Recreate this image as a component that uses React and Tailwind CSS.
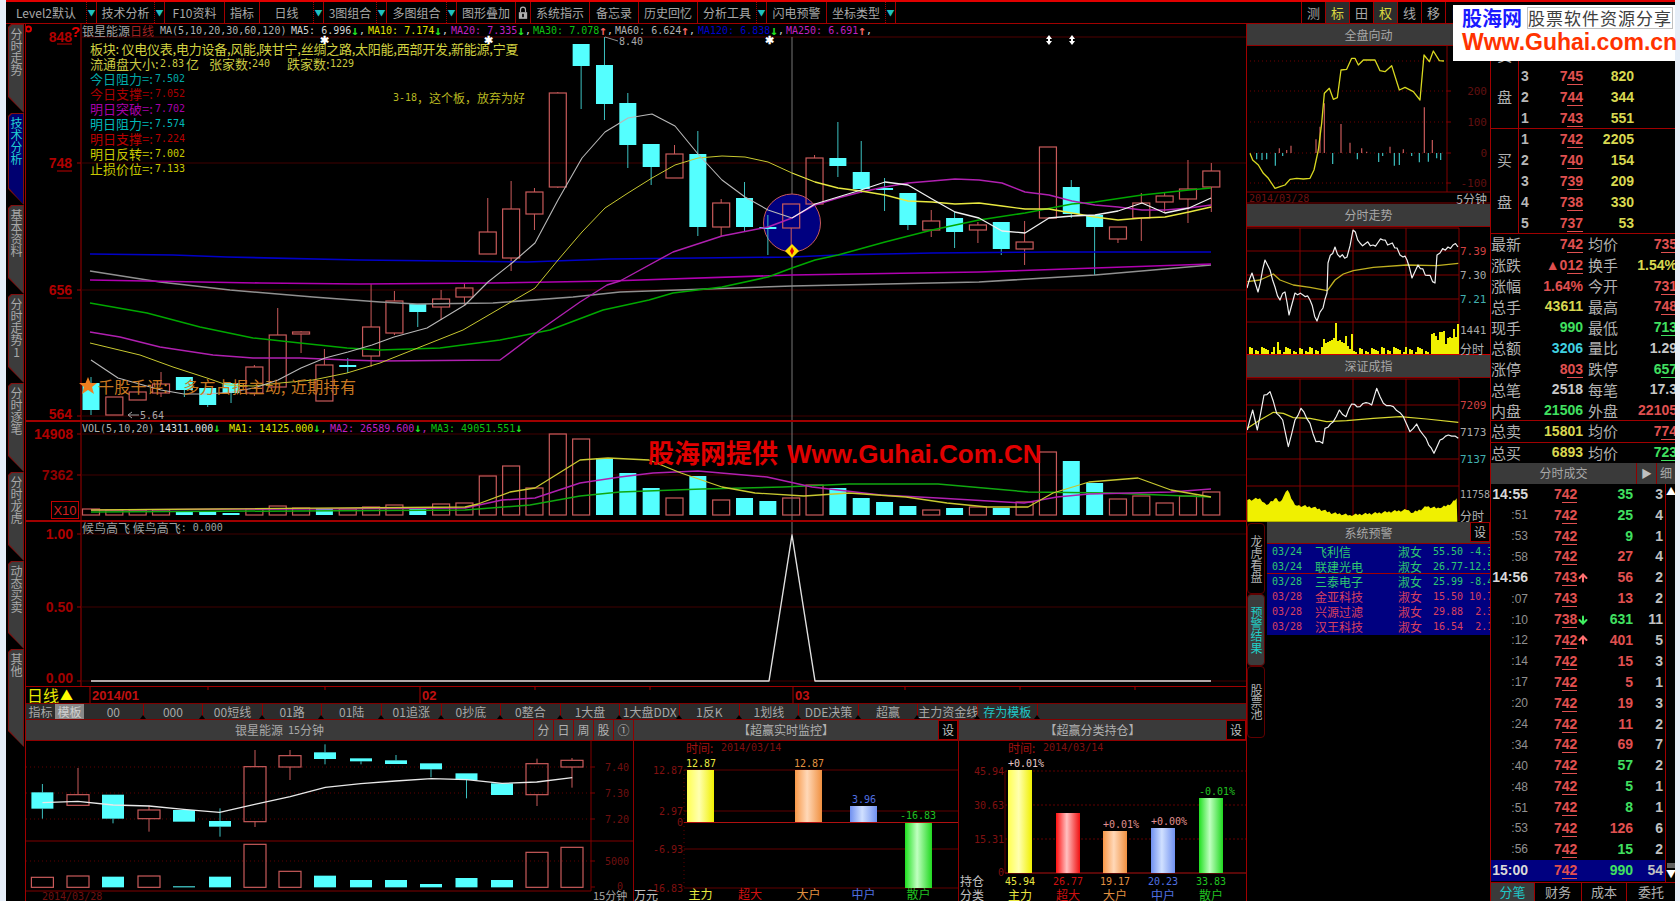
import React from "react";
import { ArrowUp, ArrowDown } from "lucide-react";

const mono = "[font-family:'DejaVu_Sans_Mono','Noto_Sans_CJK_SC',monospace] text-[10px]";
const arial = "[font-family:'Liberation_Sans',sans-serif] font-bold text-[14px]";
const MONO = "DejaVu Sans Mono";
const SANS = "Liberation Sans";
const CJK = "Noto Sans CJK SC";
const P = (a) => a.map((p) => p.join(",")).join(" ");
const Pl = ({ p, c, w = 1.4 }) => <polyline points={P(p)} fill="none" stroke={c} strokeWidth={w} strokeLinejoin="round" />;
const H = ({ y, x1, x2, c = "#400000", w = 1, d }) => <line x1={x1} x2={x2} y1={y} y2={y} stroke={c} strokeWidth={w} strokeDasharray={d} />;
const V = ({ x, y1, y2, c = "#800000", w = 1, d }) => <line x1={x} x2={x} y1={y1} y2={y2} stroke={c} strokeWidth={w} strokeDasharray={d} />;
const T = ({ x, y, c = "#a00000", s = 10, a = "start", f = MONO, b, ls, children }) => (
  <text x={x} y={y} fill={c} fontSize={s} textAnchor={a} fontFamily={f} fontWeight={b ? 700 : 400} letterSpacing={ls} dominantBaseline="central">{children}</text>
);
const jag = (a, step, amp) => {
  const out = [];
  let k = 0;
  for (let i = 0; i < a.length - 1; i++) {
    const [x1, y1] = a[i];
    const [x2, y2] = a[i + 1];
    const n = Math.max(1, Math.round((x2 - x1) / step));
    for (let j = 0; j < n; j++) {
      k++;
      const t = j / n;
      out.push([x1 + (x2 - x1) * t, y1 + (y2 - y1) * t + (j === 0 ? 0 : (((k * 73) % 5) - 2) * amp)]);
    }
  }
  out.push(a[a.length - 1]);
  return out;
};

const UP = "#c85a5a";
const CY = "#54ffff";
const WK = "#3cc0c0";
const CX = (i) => 91 + 23.34 * i;

const candles = [
  [377,383,410,415,"c"],[397,397,415,415,"r"],[392,392,400,400,"r"],[372,384,393,397,"r"],[377,377,390,397,"c"],
  [388,388,405,407,"c"],[383,383,393,403,"c"],[365,367,393,396,"r"],[308,335,387,387,"r"],[331,332,334,353,"r"],
  [349,365,401,401,"r"],[358,365,367,373,"c"],[284,327,356,367,"r"],[291,301,333,335,"r"],[304,304,312,327,"c"],
  [290,299,307,320,"r"],[283,288,297,305,"r"],[198,232,254,254,"r"],[181,209,258,271,"r"],[188,192,214,230,"r"],
  [92,93,187,188,"r"],[44,44,66,109,"c"],[37,65,104,120,"c"],[93,103,145,168,"c"],[144,144,167,185,"c"],
  [145,154,178,178,"r"],[131,154,227,236,"c"],[199,203,227,236,"r"],[182,198,227,231,"c"],[215,227,229,255,"c"],
  [204,204,228,247,"r"],[155,158,204,204,"r"],[122,158,166,177,"c"],[141,172,189,193,"c"],[178,188,190,211,"c"],
  [193,193,225,230,"c"],[210,221,230,237,"r"],[212,218,232,248,"c"],[222,225,230,243,"r"],[222,222,249,255,"c"],
  [221,242,249,265,"r"],[147,147,218,218,"r"],[180,187,214,218,"c"],[215,215,227,275,"c"],[227,227,239,243,"r"],
  [193,203,218,241,"r"],[193,196,202,213,"r"],[160,189,199,223,"r"],[163,171,187,212,"r"],
];
const ma5 = [[91,360],[118,378],[161,390],[184,394],[208,394],[232,392],[254,388],[278,380],[301,368],[325,358],[348,352],[372,345],[394,337],[427,328],[465,305],[488,282],[512,263],[535,243],[558,200],[582,158],[605,132],[628,118],[652,114],[675,126],[698,154],[722,180],[745,197],[768,210],[792,218],[815,204],[838,197],[861,190],[885,182],[908,185],[932,199],[955,212],[979,218],[1002,231],[1025,233],[1049,218],[1072,216],[1095,215],[1118,211],[1142,203],[1165,213],[1189,208],[1211,198]];
const ma10 = [[90,343],[140,355],[173,367],[207,378],[227,385],[253,386],[280,383],[313,380],[347,373],[380,363],[463,330],[535,288],[558,260],[582,232],[605,208],[628,193],[652,178],[675,165],[698,158],[722,156],[745,157],[768,162],[792,173],[815,182],[838,188],[861,191],[885,195],[908,201],[932,202],[955,204],[979,203],[1002,206],[1025,209],[1049,209],[1072,213],[1095,217],[1118,220],[1142,218],[1165,217],[1189,212],[1211,207]];
const ma20 = [[90,332],[120,337],[160,347],[213,355],[253,358],[300,358],[347,360],[380,361],[500,360],[540,330],[580,302],[607,285],[620,281],[673,252],[722,236],[768,227],[792,218],[815,205],[838,198],[861,192],[885,187],[908,183],[932,181],[955,179],[979,180],[1002,183],[1025,192],[1049,195],[1072,201],[1095,205],[1118,207],[1142,210],[1165,210],[1189,208],[1211,205]];
const ma30 = [[90,303],[147,313],[200,327],[253,338],[300,343],[347,348],[380,350],[440,348],[500,340],[550,330],[603,310],[649,300],[673,293],[722,287],[768,277],[792,268],[815,260],[838,255],[885,242],[932,230],[979,220],[1025,213],[1072,204],[1095,202],[1142,195],[1189,190],[1211,188]];
const ma120 = [[90,254],[173,255],[227,257],[360,260],[527,262],[610,259],[792,257],[838,255],[932,253],[1049,252],[1211,252]];
const ma250 = [[90,280],[260,283],[360,284],[493,283],[610,281],[792,275],[979,272],[1095,268],[1211,264]];
const maG = [[90,271],[160,282],[230,290],[313,297],[380,302],[417,304],[493,303],[573,297],[620,292],[792,286],[979,282],[1095,275],[1211,265]];

const vol = [[509,"r"],[510,"r"],[510,"r"],[510,"r"],[512,"c"],[512,"c"],[513,"c"],[509,"r"],[506,"r"],[508,"r"],[508,"c"],[509,"r"],[507,"r"],[505,"r"],[509,"c"],[504,"r"],[503,"r"],[476,"r"],[466,"r"],[488,"r"],[434,"r"],[439,"r"],[458,"c"],[473,"c"],[488,"c"],[498,"r"],[476,"c"],[500,"r"],[498,"c"],[501,"c"],[498,"r"],[485,"r"],[488,"c"],[498,"c"],[502,"c"],[506,"c"],[510,"r"],[508,"c"],[507,"r"],[508,"c"],[502,"r"],[452,"r"],[461,"c"],[483,"c"],[499,"r"],[496,"r"],[503,"r"],[496,"r"],[492,"r"]];
const vY = [[91,510],[465,507],[478,504],[510,492],[535,488],[580,460],[608,458],[649,460],[681,473],[722,487],[755,493],[804,496],[849,493],[906,497],[947,503],[987,507],[1028,507],[1053,493],[1089,482],[1138,478],[1171,490],[1211,497]];
const vM = [[91,510],[465,508],[502,500],[535,498],[580,483],[620,477],[653,473],[698,471],[767,477],[812,487],[881,495],[938,498],[1024,503],[1057,497],[1089,494],[1130,493],[1171,492],[1211,489]];
const vG = [[91,512],[465,510],[530,505],[580,496],[620,492],[702,489],[783,487],[849,484],[938,484],[1028,492],[1110,493],[1211,497]];

const Candle = ({ x, hi, top, bot, lo, t, w = 17 }) => (
  <g>
    <line x1={x} x2={x} y1={hi} y2={top} stroke={t === "r" ? UP : WK} />
    <line x1={x} x2={x} y1={bot} y2={lo} stroke={t === "r" ? UP : WK} />
    {t === "r" ? (
      <rect x={x - w / 2} y={top} width={w} height={Math.max(bot - top, 1)} fill="none" stroke={UP} strokeWidth={1.2} />
    ) : (
      <rect x={x - w / 2} y={top} width={w} height={Math.max(bot - top, 1)} fill={CY} />
    )}
  </g>
);

function MainChart() {
  return (
    <svg viewBox="26 24 1220 396" width="1220" height="396" className="block">
      <V x={81} y1={24} y2={420} c="#a00000" />
      <H y={37} x1={81} x2={1246} c="#500000" />
      <H y={163} x1={81} x2={1246} />
      <H y={290} x1={81} x2={1246} />
      <H y={416} x1={81} x2={1246} />
      <V x={792} y1={37} y2={420} c="#777777" />
      <ellipse cx={792} cy={223} rx={28.5} ry={29} fill="#000080" stroke="#c85a5a" />
      {candles.map((c, i) => (
        <Candle key={i} x={CX(i)} hi={c[0]} top={c[1]} bot={c[2]} lo={c[3]} t={c[4]} />
      ))}
      <Pl p={maG} c="#909090" w={1.6} />
      <Pl p={ma250} c="#b000b0" w={1.6} />
      <Pl p={ma120} c="#0000c8" w={1.6} />
      <Pl p={ma30} c="#00a800" w={1.5} />
      <Pl p={ma20} c="#b020b0" w={1.4} />
      <Pl p={ma10.filter((q) => q[0] <= 792)} c="#c8c830" w={1} />
      <Pl p={ma10.filter((q) => q[0] >= 792)} c="#e8e840" w={1.3} />
      <Pl p={ma5.filter((q) => q[0] <= 792)} c="#b8b8b8" w={1.1} />
      <Pl p={ma5.filter((q) => q[0] >= 792)} c="#f0f0f0" w={1.3} />
      <polygon points="792,244 799,251 792,258 785,251" fill="#ffe000" />
      <polygon points="792,247 794,251 792,255 790,251" fill="#e00000" />
      <polyline points="605,37 618,41" stroke="#909090" fill="none" />
      <T x={619} y={41} c="#a8a8a8">8.40</T>
      <polyline points="132,412 128,415 132,418" stroke="#a0a0a0" fill="none" />
      <H y={415} x1={128} x2={139} c="#a0a0a0" />
      <T x={129 + 11} y={415} c="#a8a8a8">5.64</T>
      <T x={72} y={37} s={14} f={SANS} b a="end" c="#b00000">848</T>
      <T x={72} y={163} s={14} f={SANS} b a="end" c="#b00000">748</T>
      <T x={72} y={290} s={14} f={SANS} b a="end" c="#b00000">656</T>
      <T x={72} y={414} s={14} f={SANS} b a="end" c="#b00000">564</T>
      <H y={44} x1={57} x2={72} c="#c00000" />
      <H y={171} x1={57} x2={72} c="#c00000" />
      <H y={298} x1={57} x2={72} c="#c00000" />
      {[163, 290, 416].map((y) => <H key={y} y={y} x1={77} x2={81} c="#a00000" />)}
      <T x={71} y={31} s={15} f={SANS} b c="#e00000">?</T>
      <circle cx={28.5} cy={29} r={2.5} fill="none" stroke="#e00000" strokeWidth={2} />
      <text x={324} y={44} fill="#fff" fontSize={11} textAnchor="middle" fontFamily={SANS} fontWeight={700}>✱</text>
      <text x={488} y={44} fill="#fff" fontSize={11} textAnchor="middle" fontFamily={SANS} fontWeight={700}>✱</text>
      <text x={769} y={44} fill="#fff" fontSize={11} textAnchor="middle" fontFamily={SANS} fontWeight={700}>✱</text>
      <polygon points="1049,35 1052,39 1050,39 1050,41 1052,41 1049,45 1046,41 1048,41 1048,39 1046,39" fill="#fff" />
      <polygon points="1072,35 1075,39 1073,39 1073,41 1075,41 1072,45 1069,41 1071,41 1071,39 1069,39" fill="#fff" />
      <polygon points="88,377 90.5,383 97,383 92,387 94,394 88,390 82,394 84,387 79,383 85.5,383" fill="#f08020" />
    </svg>
  );
}

function VolChart() {
  return (
    <svg viewBox="26 422 1220 98" width="1220" height="98" className="block">
      <V x={81} y1={422} y2={520} c="#a00000" />
      <H y={434} x1={81} x2={1246} />
      <H y={475} x1={81} x2={1246} />
      <V x={792} y1={422} y2={520} c="#777777" />
      {vol.map((v, i) =>
        v[1] === "r" ? (
          <rect key={i} x={CX(i) - 8.5} y={v[0]} width={17} height={515 - v[0]} fill="none" stroke={UP} strokeWidth={1.2} />
        ) : (
          <rect key={i} x={CX(i) - 8.5} y={v[0]} width={17} height={515 - v[0]} fill={CY} />
        )
      )}
      <Pl p={vG} c="#10a810" w={1.5} />
      <Pl p={vM} c="#b020b0" w={1.5} />
      <Pl p={vY} c="#c8c830" w={1.3} />
      <T x={73} y={434} s={14} f={SANS} b a="end" c="#b00000">14908</T>
      <T x={73} y={475} s={14} f={SANS} b a="end" c="#900000">7362</T>
      {[434, 475].map((y) => <H key={y} y={y} x1={77} x2={81} c="#a00000" />)}
      <rect x={51.5} y={501.5} width={27} height={17} fill="none" stroke="#c00000" />
      <T x={65} y={510} s={13} f={SANS} a="middle" c="#d02020">X10</T>
    </svg>
  );
}

function OscChart() {
  return (
    <svg viewBox="26 522 1220 164" width="1220" height="164" className="block">
      <V x={81} y1={522} y2={686} c="#a00000" />
      <H y={534} x1={81} x2={1246} />
      <H y={607} x1={81} x2={1246} />
      <H y={681} x1={81} x2={1246} />
      <V x={792} y1={522} y2={535} c="#777777" />
      <Pl p={[[91,681],[769,681],[792,535],[815,681],[1211,681]]} c="#e0e0e0" w={1.4} />
      <T x={73} y={534} s={14} f={SANS} b a="end" c="#b00000">1.00</T>
      <T x={73} y={607} s={14} f={SANS} b a="end" c="#a00000">0.50</T>
      <T x={73} y={678} s={14} f={SANS} b a="end" c="#a00000">0.00</T>
      {[534, 607, 681].map((y) => <H key={y} y={y} x1={77} x2={81} c="#a00000" />)}
    </svg>
  );
}

function DateRow() {
  return (
    <div className="flex h-[16px] bg-black">
      <div className="flex w-[55px] items-center pl-[1px] text-[16px] leading-[16px] text-[#e8e800]">
        日线<span className="ml-[1px] text-[13px] text-[#ffff00]">▲</span>
      </div>
      <svg viewBox="81 687 1165 16" width="1165" height="16" className="block">
        <V x={90} y1={687} y2={703} c="#a00000" />
        <V x={420} y1={687} y2={703} c="#a00000" />
        <V x={793} y1={687} y2={703} c="#a00000" />
        {[208, 325, 535, 650, 905, 1020, 1135].map((x) => <V key={x} x={x} y1={687} y2={690} c="#a00000" />)}
        <T x={92} y={695} s={13} f={SANS} b c="#c01010">2014/01</T>
        <T x={422} y={695} s={13} f={SANS} b c="#c01010">02</T>
        <T x={795} y={695} s={13} f={SANS} b c="#c01010">03</T>
      </svg>
    </div>
  );
}

const tabItems = ["00","000","00短线","01路","01陆","01追涨","0抄底","0整合","1大盘","1大盘DDX","1反K","1划线","DDE决策","超赢","主力资金线","存为模板"];
function TabBar() {
  return (
    <div className="flex h-[17px] items-center border-y border-[#800000] bg-[#2c2c2c] text-[12px] leading-[15px] text-[#a8a8a8]">
      <div className="w-[29px] text-center">指标</div>
      <div className="w-[29px] bg-[#888888] text-center text-[#d0d0d0]">模板</div>
      {tabItems.map((t, i) => (
        <div key={i} className={"relative h-full w-[59.6px] whitespace-nowrap border-r border-[#900000] text-center " + (t === "存为模板" ? "text-[#20c8c8]" : "")}>
          {t}
          <span className="absolute -right-[3px] bottom-0 h-0 w-0 border-x-[3px] border-b-[4px] border-x-transparent border-b-black" />
        </div>
      ))}
      <div className="flex-1" />
    </div>
  );
}

const Title = ({ children, h = "h-[22px]", cls = "" }) => (
  <div className={"flex items-center justify-center border-b border-[#900000] bg-[#3a3a3a] text-[12px] text-[#a8a8a8] " + h + " " + cls}>{children}</div>
);
const Sbtn = ({ children }) => (
  <div className="flex h-[20px] w-[20px] shrink-0 items-center justify-center border border-[#a00000] bg-black text-[12px] text-[#c0c0c0]">{children}</div>
);

const k15 = [
  [312,337,386,416,"c"],[264,344,376,376,"r"],[344,344,416,430,"c"],[376,390,416,455,"r"],[388,390,425,425,"c"],[385,423,440,470,"c"],[210,260,425,441,"r"],[210,227,261,300,"r"],[193,217,237,253,"c"],[235,235,244,253,"c"],[225,241,252,252,"c"],[250,250,268,292,"c"],[280,280,300,355,"c"],[310,310,345,345,"c"],[236,251,344,378,"r"],[234,241,261,323,"r"],
];
const k15x = [42.4,78,113,149,184,220,255,290,325,361,396,431,466.5,502,537,572];
const k15m = [[104,368],[191,364],[277,375],[365,378],[450,388],[538,397],[624,373],[711,350],[797,322],[884,311],[969,303],[1057,296],[1143,299],[1230,310],[1315,306],[1402,293]];
const k15v = [[592,"r"],[588,"r"],[590,"c"],[588,"r"],[619,"c"],[590,"c"],[493,"r"],[574,"r"],[587,"c"],[600,"c"],[600,"c"],[612,"c"],[594,"c"],[600,"c"],[517,"r"],[502,"r"]];
const zy = (v) => 680 + v / 3;

function KChart() {
  return (
    <svg viewBox="26 741 607 160" width="607" height="160" className="block">
      {[767, 793, 819, 861].map((y) => <H key={y} y={y} x1={26} x2={591} c="#600000" d="1 3" />)}
      <H y={841} x1={26} x2={633} c="#800000" />
      <H y={891} x1={26} x2={591} c="#800000" />
      <V x={591} y1={741} y2={891} c="#800000" />
      {[767, 793, 819, 861, 887].map((y) => <H key={y} y={y} x1={591} x2={595} c="#800000" />)}
      {k15.map((c, i) => (
        <Candle key={i} x={k15x[i]} hi={zy(c[0])} top={zy(c[1])} bot={zy(c[2])} lo={zy(c[3])} t={c[4]} w={22} />
      ))}
      {k15v.map((v, i) =>
        v[1] === "r" ? (
          <rect key={i} x={k15x[i] - 11} y={zy(v[0])} width={22} height={zy(622) - zy(v[0])} fill="none" stroke={UP} strokeWidth={1.2} />
        ) : (
          <rect key={i} x={k15x[i] - 11} y={zy(v[0])} width={22} height={zy(622) - zy(v[0])} fill={CY} />
        )
      )}
      <Pl p={k15m.map((p) => [p[0] / 2.45, zy(p[1])])} c="#e8e8e8" w={1.3} />
      <T x={605} y={767} c="#701010">7.40</T>
      <T x={605} y={793} c="#701010">7.30</T>
      <T x={605} y={819} c="#701010">7.20</T>
      <T x={605} y={861} c="#701010">5000</T>
      <T x={617} y={886} c="#701010">0</T>
      <T x={42} y={896} c="#701010">2014/03/28</T>
      <T x={593} y={895} s={11} f={CJK} c="#a8a8a8">15分钟</T>
    </svg>
  );
}

const grads = [
  ["gy", "#ffff50", "#ffffb0", "#f0f000"],
  ["gr", "#ff1010", "#ffc0c0", "#f01010"],
  ["go", "#f89848", "#ffd8b8", "#f09040"],
  ["gb", "#7090f0", "#d0e0ff", "#7090f0"],
  ["gg", "#20e020", "#c0ffc0", "#20d820"],
];
const Grads = () => (
  <defs>
    {grads.map((g) => (
      <linearGradient key={g[0]} id={g[0]} x1="0" x2="1" y1="0" y2="0">
        <stop offset="0" stopColor={g[1]} />
        <stop offset="0.45" stopColor={g[2]} />
        <stop offset="1" stopColor={g[3]} />
      </linearGradient>
    ))}
  </defs>
);
const YL = "#e8e840";
const RD = "#d01010";
const OR = "#e09040";
const BL = "#5070e0";
const GN = "#20c020";

function MonitorChart() {
  const xs = [700.5, 750, 808.5, 863.5, 918.5];
  const labs = ["主力", "超大", "大户", "中户", "散户"];
  const cs = [YL, RD, OR, BL, GN];
  return (
    <svg viewBox="634 741 324 160" width="324" height="160" className="block">
      <Grads />
      <H y={770} x1={684} x2={958} c="#600000" />
      <H y={811} x1={684} x2={958} c="#600000" />
      <H y={849} x1={684} x2={958} c="#600000" />
      <H y={888} x1={684} x2={958} c="#600000" />
      <V x={684} y1={770} y2={888} c="#600000" d="1 3" />
      <T x={686} y={747} s={12} f={CJK} c="#a01010">时间:</T>
      <T x={721} y={747} c="#801010">2014/03/14</T>
      <T x={683} y={770} a="end" c="#801010">12.87</T>
      <T x={683} y={811} a="end" c="#801010">2.97</T>
      <T x={683} y={822} a="end" c="#801010">0</T>
      <T x={683} y={849} a="end" c="#801010">-6.93</T>
      <T x={683} y={888} a="end" c="#801010">-16.83</T>
      <rect x={687} y={770} width={27} height={52} fill="url(#gy)" />
      <rect x={795} y={770} width={27} height={52} fill="url(#go)" />
      <rect x={850} y={806} width={27} height={16} fill="url(#gb)" />
      <rect x={905} y={823} width={27} height={65} fill="url(#gg)" />
      <H y={822.5} x1={684} x2={958} c="#b01010" />
      <T x={701} y={763} a="middle" c={YL}>12.87</T>
      <T x={809} y={763} a="middle" c={OR}>12.87</T>
      <T x={864} y={799} a="middle" c={BL}>3.96</T>
      <T x={918} y={815} a="middle" c={GN}>-16.83</T>
      {labs.map((l, i) => <T key={l} x={xs[i]} y={893} s={12} f={CJK} a="middle" c={cs[i]}>{l}</T>)}
      <T x={634} y={894} s={12} f={CJK} c="#c0c0c0">万元</T>
    </svg>
  );
}

function HoldChart() {
  const bars = [[1008,770,"gy"],[1056,813,"gr"],[1103,831,"go"],[1151,828,"gb"],[1199,798,"gg"]];
  const vals = ["45.94","26.77","19.17","20.23","33.83"];
  const labs = ["主力", "超大", "大户", "中户", "散户"];
  const cs = [YL, RD, OR, BL, GN];
  return (
    <svg viewBox="959 741 287 160" width="287" height="160" className="block">
      <Grads />
      {[771, 805, 839].map((y) => <H key={y} y={y} x1={1005} x2={1246} c="#600000" d="2 2" />)}
      <H y={873} x1={1005} x2={1246} c="#b01010" />
      <V x={1005} y1={771} y2={873} c="#600000" />
      <T x={1008} y={747} s={12} f={CJK} c="#a01010">时间:</T>
      <T x={1043} y={747} c="#801010">2014/03/14</T>
      <T x={1004} y={771} a="end" c="#801010">45.94</T>
      <T x={1004} y={805} a="end" c="#801010">30.63</T>
      <T x={1004} y={839} a="end" c="#801010">15.31</T>
      <T x={1004} y={872} a="end" c="#801010">0</T>
      {bars.map((b) => <rect key={b[0]} x={b[0]} y={b[1]} width={24} height={873 - b[1]} fill={`url(#${b[2]})`} />)}
      <T x={1008} y={763} c="#e8c8c8">+0.01%</T>
      <T x={1103} y={824} c="#e09090">+0.01%</T>
      <T x={1151} y={821} c="#e09090">+0.00%</T>
      <T x={1199} y={791} c={GN}>-0.01%</T>
      {vals.map((v, i) => <T key={v} x={bars[i][0] + 12} y={881} a="middle" c={cs[i]}>{v}</T>)}
      {labs.map((l, i) => <T key={l} x={bars[i][0] + 12} y={894} s={12} f={CJK} a="middle" c={cs[i]}>{l}</T>)}
      <T x={960} y={880} s={12} f={CJK} c="#c0c0c0">持仓</T>
      <T x={960} y={894} s={12} f={CJK} c="#c0c0c0">分类</T>
    </svg>
  );
}

function BottomPanels() {
  return (
    <div className="flex h-[181px]">
      <div className="w-[608px] border-r border-[#900000]">
        <div className="flex h-[21px] border-b border-[#900000] bg-[#3a3a3a]">
          <div className="flex flex-1 items-center justify-center text-[12px] text-[#a8a8a8]">
            银星能源<span className={mono + " ml-[5px] text-[#a8a8a8]"}>15</span>分钟
          </div>
          {["分", "日", "周", "股", "①"].map((b) => (
            <div key={b} className="flex w-[20px] items-center justify-center border-l border-[#900000] text-[12px] text-[#b0b0b0]">{b}</div>
          ))}
        </div>
        <KChart />
      </div>
      <div className="w-[325px] border-r border-[#900000]">
        <div className="flex h-[21px] items-center border-b border-[#900000] bg-[#3a3a3a]">
          <div className="flex-1 text-center text-[12px] text-[#b0b0b0]">【超赢实时监控】</div>
          <Sbtn>设</Sbtn>
        </div>
        <MonitorChart />
      </div>
      <div className="w-[287px]">
        <div className="flex h-[21px] items-center border-b border-[#900000] bg-[#3a3a3a]">
          <div className="flex-1 text-center text-[12px] text-[#b0b0b0]">【超赢分类持仓】</div>
          <Sbtn>设</Sbtn>
        </div>
        <HoldChart />
      </div>
    </div>
  );
}

const HeadItem = ({ cls, label, val, c, arrow, ac, comma = true }) => (
  <div className={"flex items-center whitespace-pre " + mono + " " + cls} >
    <span className={c}>{label} </span>
    <span className={c}>{val}</span>
    <span className={"text-[13px] font-bold " + ac}>{arrow}</span>
    {comma && <span className="text-[#d0d0d0]">,</span>}
  </div>
);

const infoRows = [
  ["今日阻力=:", "7.502", "text-[#00a8a8]"],
  ["今日支撑=:", "7.052", "text-[#a80000]"],
  ["明日突破=:", "7.702", "text-[#a800a8]"],
  ["明日阻力=:", "7.574", "text-[#00b8b8]"],
  ["明日支撑=:", "7.224", "text-[#b80000]"],
  ["明日反转=:", "7.002", "text-[#c8c800]"],
  ["止损价位=:", "7.133", "text-[#c8c800]"],
];

function MainPanel() {
  return (
    <div className="relative h-[398px] border-b-2 border-[#a00000]">
      <MainChart />
      <div className="absolute left-[56px] top-0 flex h-[13px] items-center leading-[13px]">
        <span className="w-[48px] whitespace-nowrap text-[12px] text-[#a0a0a0]">银星能源</span>
        <span className="w-[30px] whitespace-nowrap text-[12px] text-[#a02020]">日线</span>
        <span className={mono + " w-[131px] whitespace-pre text-[#b0b0b0]"}>MA(5,10,20,30,60,120)</span>
        <HeadItem cls="w-[77px]" label="MA5:" val="6.996" c="text-[#d0d0d0]" arrow="↓" ac="text-[#20e020]" />
        <HeadItem cls="w-[83px]" label="MA10:" val="7.174" c="text-[#e0e000]" arrow="↓" ac="text-[#20e020]" />
        <HeadItem cls="w-[82px]" label="MA20:" val="7.335" c="text-[#c020c0]" arrow="↓" ac="text-[#20e020]" />
        <HeadItem cls="w-[82px]" label="MA30:" val="7.078" c="text-[#10c010]" arrow="↑" ac="text-[#f06060]" />
        <HeadItem cls="w-[83px]" label="MA60:" val="6.624" c="text-[#b0b0b0]" arrow="↑" ac="text-[#f06060]" />
        <HeadItem cls="w-[88px]" label="MA120:" val="6.838" c="text-[#0000c8]" arrow="↓" ac="text-[#20e020]" />
        <HeadItem cls="w-[88px]" label="MA250:" val="6.691" c="text-[#c020c0]" arrow="↑" ac="text-[#f06060]" />
      </div>
      <div className="absolute left-[64px] top-[17px] flex flex-col text-[13px] leading-[15px]">
        <div className="whitespace-pre tracking-[-0.25px] text-[#d0d040]">板块: 仪电仪表,电力设备,风能,陕甘宁,丝绸之路,太阳能,西部开发,新能源,宁夏</div>
        <div className="flex whitespace-pre text-[#c8c840]">
          <span className="w-[70px]">流通盘大小:</span>
          <span className={mono + " w-[26px] leading-[15px]"}>2.83</span>
          <span className="w-[23px]">亿</span>
          <span className="w-[43px]">张家数:</span>
          <span className={mono + " w-[35px] leading-[15px]"}>240</span>
          <span className="w-[43px]">跌家数:</span>
          <span className={mono + " leading-[15px]"}>1229</span>
        </div>
        {infoRows.map((r) => (
          <div key={r[0]} className={"flex " + r[2]}>
            <span className="w-[65px] whitespace-nowrap">{r[0]}</span>
            <span className={mono + " leading-[15px]"}>{r[1]}</span>
          </div>
        ))}
      </div>
      <div className="absolute left-[367px] top-[67px] flex h-[14px] items-center whitespace-nowrap text-[12px] leading-[14px] text-[#b8b820]">
        <span className={mono}>3-18</span>，这个板，放弃为好
      </div>
      <div className="absolute left-[72px] top-[352px] flex whitespace-nowrap text-[16px] leading-[20px] tracking-[0.3px] text-[#c87820]">
        <span>千股千评</span>
        <span className="w-[20px]">:</span>
        <span>多方占据主动</span>
        <span className="w-[10px]">,</span>
        <span>近期持有</span>
      </div>
    </div>
  );
}

function VolPanel() {
  return (
    <div className="relative h-[100px] border-b-2 border-[#a00000]">
      <VolChart />
      <div className={mono + " absolute left-[56px] top-0 flex h-[13px] items-center whitespace-pre leading-[13px]"}>
        <span className="w-[77px] text-[#b0b0b0]">VOL(5,10,20)</span>
        <span className="w-[70px] text-[#e0e0e0]">14311.000<span className="text-[12px] font-bold text-[#20e020]">↓</span></span>
        <span className="w-[101px] text-[#e0e000]">MA1: 14125.000<span className="text-[12px] font-bold text-[#20e020]">↓</span>,</span>
        <span className="w-[101px] text-[#c020c0]">MA2: 26589.600<span className="text-[12px] font-bold text-[#20e020]">↓</span>,</span>
        <span className="text-[#10c010]">MA3: 49051.551<span className="text-[12px] font-bold text-[#20e020]">↓</span></span>
      </div>
    </div>
  );
}

function OscPanel() {
  return (
    <div className="relative h-[165px] border-b border-[#a00000]">
      <OscChart />
      <div className="absolute left-[56px] top-0 flex h-[12px] items-center whitespace-pre text-[12px] leading-[12px] text-[#a0a0a0]">
        候鸟高飞 候鸟高飞<span className={mono}>: 0.000</span>
      </div>
    </div>
  );
}

const leftTabs = [
  ["分时走势", "h-[89px]"],
  ["技术分析", "h-[92px]", true],
  ["基本资料", "h-[89px]"],
  ["分时走势1", "h-[89px]"],
  ["分时逐笔", "h-[89px]"],
  ["分时龙虎", "h-[89px]"],
  ["动态买卖", "h-[88px]"],
  ["其他", "h-[98px]"],
];
function LeftTabs() {
  return (
    <div className="flex w-[19px] shrink-0 flex-col pl-[2px]">
      {leftTabs.map((t) => (
        <div key={t[0]} className={"w-[16px] bg-[#801010] [clip-path:polygon(3px_0,100%_0,100%_100%,0_calc(100%_-_16px),0_3px)] " + t[1]}>
          <div className={"m-px flex h-[calc(100%_-_2px)] justify-center pt-[3px] [clip-path:polygon(3px_0,100%_0,100%_100%,0_calc(100%_-_16px),0_3px)] " + (t[2] ? "bg-[#000070] text-[#20d0d0]" : "bg-[#3c3c3c] text-[#a8a8a8]")}>
            <span className="text-[12px] leading-[14px] [text-orientation:upright] [writing-mode:vertical-rl]">{t[0]}</span>
          </div>
        </div>
      ))}
    </div>
  );
}

const toolItems = [
  ["Level2默认", "w-[91px]", 1],
  ["技术分析", "w-[68px]", 1],
  ["F10资料", "w-[60px]"],
  ["指标", "w-[35px]"],
  ["日线", "w-[64px]", 1],
  ["3图组合", "w-[63px]", 1],
  ["多图组合", "w-[70px]", 1],
  ["图形叠加", "w-[59px]"],
  ["🔓", "w-[15px]"],
  ["系统指示", "w-[59px]"],
  ["备忘录", "w-[49px]"],
  ["历史回忆", "w-[59px]"],
  ["分析工具", "w-[69px]", 1],
  ["闪电预警", "w-[60px]"],
  ["坐标类型", "w-[69px]", 1],
];
const rightBtns = [["测", ""], ["标", "bg-[#2c2c2c] text-[#d8d840]"], ["田", ""], ["权", "bg-[#2c2c2c] text-[#d8d840]"], ["线", ""], ["移", ""], ["日", ""]];

function Toolbar() {
  return (
    <div className="flex h-[24px] shrink-0 border-b border-t-2 border-b-[#a00000] border-t-[#e00000] text-[12px] leading-[21px] text-[#a8a8a8]">
      {toolItems.map((t, i) => (
        <div key={i} className={"flex h-full shrink-0 items-center border-r border-[#a00000] " + t[1]}>
          <div className="flex-1 whitespace-nowrap text-center">
            {t[0] === "🔓" ? (
              <svg viewBox="0 0 12 16" className="mx-auto h-[14px] w-[10px]">
                <path d="M3 7V4a3 3 0 0 1 6 0v3" fill="none" stroke="#b0b0b0" strokeWidth="1.4" />
                <rect x="1" y="7" width="10" height="8" fill="#b0b0b0" />
                <rect x="5" y="9" width="2" height="4" fill="#000" />
              </svg>
            ) : t[0]}
          </div>
          {t[2] && (
            <div className="flex h-full w-[10px] items-center justify-center border-l border-dotted border-[#a00000] text-[8px] text-[#20c0c0]">▼</div>
          )}
        </div>
      ))}
      <div className="w-[405px] shrink-0" />
      {rightBtns.map((b) => (
        <div key={b[0]} className={"flex h-full w-[24px] shrink-0 items-center justify-center border-l border-[#a00000] text-[13px] " + b[1]}>{b[0]}</div>
      ))}
    </div>
  );
}

/* small charts */
const m = (a, oy = 250) => a.map((p) => [1240 + p[0] / 3, oy + p[1] / 3]);
const panYellow = [[30,460],[38,480],[55,495],[70,520],[85,535],[105,565],[120,560],[135,555],[150,538],[170,535],[190,537],[210,535],[222,510],[235,450],[245,370],[253,280],[268,265],[280,298],[292,293],[303,210],[320,208],[335,175],[345,175],[355,195],[370,180],[405,180],[420,212],[435,215],[455,197],[478,270],[495,262],[520,275],[540,300],[552,165],[568,185],[580,153],[598,182],[612,183]];
const panUp = [[118,445],[140,450],[153,437],[228,418],[240,380],[253,310],[303,372],[330,428],[365,445],[380,455],[450,440],[490,448],[553,322],[577,420]];
const panDn = [[50,478],[66,480],[80,478],[106,497],[128,468],[278,492],[352,478],[416,486],[428,468],[463,497],[478,495],[515,468],[538,487],[565,485],[590,475],[602,480]];

function PanChart() {
  return (
    <svg viewBox="1247 46 243 158" width="243" height="158" className="block">
      {[61, 91, 122, 183].map((y) => <H key={y} y={y} x1={1250} x2={1447} c="#700000" d="1 3" />)}
      <H y={153} x1={1250} x2={1447} c="#700000" d="1 3" />
      <V x={1447} y1={46} y2={192} c="#800000" />
      <H y={192} x1={1247} x2={1490} c="#800000" />
      <H y={203} x1={1247} x2={1490} c="#800000" />
      {[91, 122, 153, 183].map((y) => <H key={y} y={y} x1={1447} x2={1451} c="#800000" />)}
      {panUp.map((p, i) => <V key={i} x={1240 + p[0] / 3} y1={p[1] / 3} y2={153} c={UP} w={1.2} />)}
      {panDn.map((p, i) => <V key={i} x={1240 + p[0] / 3} y1={153} y2={p[1] / 3} c={WK} w={1.2} />)}
      <Pl p={panYellow.map((p) => [1240 + p[0] / 3, p[1] / 3])} c="#d8d820" w={1.3} />
      <T x={1487} y={91} a="end" s={11} c="#601010">200</T>
      <T x={1487} y={122} a="end" s={11} c="#601010">100</T>
      <T x={1487} y={153} a="end" s={11} c="#601010">0</T>
      <T x={1487} y={183} a="end" s={11} c="#601010">-100</T>
      <T x={1249} y={198} s={10} c="#701010">2014/03/28</T>
      <T x={1487} y={198} s={12} f={CJK} a="end" c="#b0b0b0">5分钟</T>
    </svg>
  );
}

const fsW = [[1247,288],[1252,273],[1258,292],[1265,260],[1270,270],[1275,287],[1280,300],[1285,292],[1289,315],[1295,293],[1303,295],[1310,300],[1317,321],[1323,308],[1327,293],[1328,263],[1335,247],[1340,257],[1347,257],[1353,230],[1360,243],[1373,245],[1383,240],[1397,248],[1403,257],[1407,260],[1412,278],[1418,265],[1435,283],[1437,255],[1440,253],[1448,247],[1453,245],[1458,247]];
const fsY = m([[22,95],[60,90],[100,72],[120,90],[160,105],[210,112],[262,122],[285,90],[310,72],[340,62],[400,52],[500,45],[590,47],[655,40]]);
const fsVol = Array.from({ length: 106 }, (_, i) => {
  let h = (i * 37) % 11 < 3 ? 0 : 2 + ((i * 53) % 6);
  if (i >= 38 && i <= 50) h += 8 + ((i * 7) % 5);
  if (i >= 92) h += 10 + ((i * 11) % 9);
  if (i === 15) h = 12;
  if (i === 44) h = 31;
  if (i === 52) h = 20;
  if (i === 105) h = 30;
  if (i === 96) h = 22;
  return h;
});

function FsChart() {
  return (
    <svg viewBox="1247 227 243 128" width="243" height="128" className="block">
      <H y={228} x1={1247} x2={1459} c="#900000" />
      {[251, 275, 299, 322].map((y) => <H key={y} y={y} x1={1247} x2={1459} c="#800000" />)}
      {[1300, 1353, 1406, 1459].map((x) => <V key={x} x={x} y1={228} y2={354} c="#800000" />)}
      {fsVol.map((h, i) => h > 0 && <V key={i} x={1248 + i * 2} y1={354 - h} y2={354} c="#f0f000" w={2} />)}
      <Pl p={fsY} c="#c0b020" w={1.3} />
      <Pl p={jag(fsW, 2.5, 1.2)} c="#f0f0f0" w={1.2} />
      <H y={354.5} x1={1247} x2={1490} c="#d00000" />
      <T x={1460} y={251} s={11} c="#d04040">7.39</T>
      <T x={1460} y={275} s={11} c="#a8a8a8">7.30</T>
      <T x={1460} y={299} s={11} c="#40b0b0">7.21</T>
      <T x={1460} y={330} s={11} c="#a8a8a8">1441</T>
      <T x={1460} y={348} s={12} f={CJK} c="#b0b0b0">分时</T>
    </svg>
  );
}

const szW = m([[22,540],[38,480],[52,540],[72,435],[90,425],[110,490],[128,510],[145,590],[165,510],[183,475],[210,520],[228,575],[248,580],[255,535],[280,515],[298,480],[318,500],[335,462],[360,470],[378,458],[395,465],[410,415],[430,460],[460,470],[490,500],[510,545],[530,522],[550,555],[582,610],[600,570],[625,555],[655,565]]);
const szY = m([[22,535],[60,510],[100,487],[130,490],[160,503],[210,505],[260,515],[320,512],[400,505],[480,500],[560,507],[655,517]]);
const szA = m([[22,815],[22,750],[60,745],[80,765],[105,745],[120,755],[143,720],[165,765],[220,772],[280,790],[330,795],[400,790],[500,780],[520,788],[560,770],[600,775],[635,760],[650,745],[652,815]]);

function SzChart() {
  return (
    <svg viewBox="1247 378 243 144" width="243" height="144" className="block">
      <H y={379} x1={1247} x2={1459} c="#900000" />
      {[405, 432, 459, 486].map((y) => <H key={y} y={y} x1={1247} x2={1459} c="#800000" />)}
      {[1300, 1353, 1406, 1459].map((x) => <V key={x} x={x} y1={379} y2={521} c="#800000" />)}
      <polygon points={P(jag(szA.slice(1, -1), 2, 0.6).concat([szA[szA.length - 1], szA[0]]))} fill="#f0f000" />
      <Pl p={szY} c="#d8d830" w={1.2} />
      <Pl p={jag(szW, 3, 0.6)} c="#f0f0f0" w={1.2} />
      <T x={1460} y={405} s={11} c="#d04040">7209</T>
      <T x={1460} y={432} s={11} c="#a8a8a8">7173</T>
      <T x={1460} y={459} s={11} c="#40b0b0">7137</T>
      <T x={1460} y={494} s={10} c="#a8a8a8">11758</T>
      <T x={1460} y={515} s={12} f={CJK} c="#b0b0b0">分时</T>
    </svg>
  );
}

const sideTabs = [
  ["龙虎看盘", "h-[71px] pt-[11px]", "bg-black text-[#b0b0b0]"],
  ["预警结果", "h-[72px] pt-[11px]", "bg-[#3c3c3c] text-[#20d0c8]"],
  ["股票池", "h-[72px] pt-[17px]", "bg-black text-[#b0b0b0]"],
];
const alerts = [
  ["03/24", "飞利信", "55.50 -4.39", 1],
  ["03/24", "联建光电", "26.77-12.56", 1],
  ["03/28", "三泰电子", "25.99 -8.46", 1],
  ["03/28", "金亚科技", "15.50 10.71", 0],
  ["03/28", "兴源过滤", "29.88  2.35", 0],
  ["03/28", "汉王科技", "16.54  2.15", 0],
];

function MidLower() {
  return (
    <div className="flex h-[379px]">
      <div className="flex w-[20px] shrink-0 flex-col pt-[1px]">
        {sideTabs.map((t) => (
          <div key={t[0]} className={"flex w-[18px] justify-center rounded-[4px] border border-[#600000] " + t[1] + " " + t[2]}>
            <span className="text-[12px] leading-[14px] [writing-mode:vertical-rl]">{t[0]}</span>
          </div>
        ))}
      </div>
      <div className="w-[223px]">
        <div className="flex h-[22px] border-b border-[#900000] bg-[#3a3a3a]">
          <div className="flex flex-1 items-center justify-center text-[12px] text-[#a8a8a8]">系统预警</div>
          <Sbtn>设</Sbtn>
        </div>
        <div className="h-[91px] overflow-hidden bg-[#000080]">
          {alerts.map((a, i) => (
            <div key={i} className={"flex h-[15px] items-center whitespace-pre pl-[5px] text-[12px] leading-[15px] " + (a[3] ? "text-[#30c870] " : "text-[#d84060] ") + (i === 1 ? "border-b border-[#a00000]" : "")}>
              <span className={mono + " w-[43px] shrink-0"}>{a[0]}</span>
              <span className="w-[83px] shrink-0">{a[1]}</span>
              <span className="w-[35px] shrink-0">淑女</span>
              <span className={mono + " shrink-0"}>{a[2]}</span>
            </div>
          ))}
        </div>
      </div>
    </div>
  );
}

const Price = ({ v, c = "text-[#e05050]" }) => (
  <span className={c}>
    {v[0]}
    <span className="border-b border-current">{v.slice(1)}</span>
  </span>
);

function BookRows({ side, rows }) {
  return (
    <div className="flex h-[105px] border-b border-[#a00000]">
      <div className="flex w-[28px] shrink-0 flex-col gap-[24px] border-r border-[#a00000] pt-[22px] text-center text-[15px] leading-[18px] text-[#b0b0b0]">
        <span>{side}</span>
        <span>盘</span>
      </div>
      <div className="flex-1">
        {rows.map((r, i) => (
          <div key={i} className={"flex h-[21px] items-center " + arial}>
            <span className="w-[33px] pl-[2px] text-[#b8b8b8]">{r[0]}</span>
            <span className="w-[31px] text-right">{r[1] ? <Price v={r[1]} /> : null}</span>
            <span className="w-[51px] text-right text-[#d8d850]">{r[2]}</span>
          </div>
        ))}
      </div>
    </div>
  );
}

const RE = "text-[#e05050]";
const YE = "text-[#d8d850]";
const GR = "text-[#40e060]";
const WH = "text-[#c8c8c8]";
const CN = "text-[#40d0e0]";
const stats = [
  ["最新", "742", RE, "均价", "735", RE, 1, 1],
  ["涨跌", "▲012", RE, "换手", "1.54%", YE, 1, 0],
  ["涨幅", "1.64%", RE, "今开", "731", RE, 0, 1],
  ["总手", "43611", YE, "最高", "748", RE, 0, 1],
  ["现手", "990", GR, "最低", "713", GR, 0, 1],
  ["总额", "3206", CN, "量比", "1.29", WH, 0, 0],
  ["涨停", "803", RE, "跌停", "657", GR, 1, 1],
  ["总笔", "2518", WH, "每笔", "17.3", WH, 0, 0],
  ["内盘", "21506", GR, "外盘", "22105", RE, 0, 0],
];
const Stat = ({ r, cls = "h-[20.8px]" }) => (
  <div className={"flex items-center overflow-hidden " + cls}>
    <span className="w-[30px] shrink-0 text-[15px] leading-[18px] text-[#b0b0b0]">{r[0]}</span>
    <span className={"w-[62px] shrink-0 text-right " + arial + " " + r[2]}>
      {r[6] ? <span>{r[1].slice(0, -2)}<span className="border-b border-current">{r[1].slice(-2)}</span></span> : r[1]}
    </span>
    <span className="ml-[5px] w-[31px] shrink-0 text-[15px] leading-[18px] text-[#b0b0b0]">{r[3]}</span>
    <span className={"w-[58px] shrink-0 text-right " + arial + " " + r[5]}>
      {r[7] ? <span>{r[4][0]}<span className="border-b border-current">{r[4].slice(1)}</span></span> : r[4]}
    </span>
  </div>
);

const ticks = [
  ["14:55","742","",35,GR,3],[":51","742","",25,GR,4],[":53","742","",9,GR,1],[":58","742","",27,RE,4],
  ["14:56","743","u",56,RE,2],[":07","743","",13,RE,2],[":10","738","d",631,GR,11],[":12","742","u",401,RE,5],
  [":14","742","",15,RE,3],[":17","742","",5,RE,1],[":20","742","",19,RE,3],[":24","742","",11,RE,2],
  [":34","742","",69,RE,7],[":40","742","",57,GR,2],[":48","742","",5,GR,1],[":51","742","",8,GR,1],
  [":53","742","",126,RE,6],[":56","742","",15,GR,2],
];
const TickRow = ({ t, last }) => (
  <div className={"flex h-[20.9px] items-center " + (last ? "bg-[#000080]" : "")}>
    <span className={"w-[37px] shrink-0 text-right [font-family:'Liberation_Sans',sans-serif] " + (t[0].length > 3 ? "text-[14px] font-bold text-[#d8d8d8]" : "text-[12px] text-[#909090]")}>{t[0]}</span>
    <span className={"ml-[26px] flex w-[33px] shrink-0 items-center " + arial}>
      <Price v={t[1]} />
      {t[2] === "u" && <ArrowUp size={12} strokeWidth={4} className="shrink-0 text-[#ff7070]" />}
      {t[2] === "d" && <ArrowDown size={12} strokeWidth={4} className="shrink-0 text-[#40f060]" />}
    </span>
    <span className={"w-[46px] shrink-0 text-right " + arial + " " + t[4]}>{t[3]}</span>
    <span className={"w-[30px] shrink-0 text-right " + arial + " text-[#c0c0c0]"}>{t[5]}</span>
  </div>
);

function Quotes() {
  return (
    <div className="flex h-[877px] w-[185px] shrink-0 flex-col overflow-hidden border-l border-[#a00000]">
      <BookRows side="卖" rows={[["", "", ""], ["", "", ""], [3,"745",820],[2,"744",344],[1,"743",551]]} />
      <BookRows side="买" rows={[[1,"742",2205],[2,"740",154],[3,"739",209],[4,"738",330],[5,"737",53]]} />
      <div className="h-[187px] shrink-0 border-b border-[#a00000]">
        {stats.map((r) => <Stat key={r[0]} r={r} />)}
      </div>
      <div className="shrink-0 border-b border-[#a00000]">
        <Stat r={["总卖","15801",YE,"均价","774",RE,0,1]} />
      </div>
      <Stat r={["总买","6893",YE,"均价","723",GR,0,1]} cls="h-[20px] shrink-0" />
      <div className="flex h-[21px] shrink-0 bg-[#3a3a3a] text-[12px] text-[#a8a8a8]">
        <div className="flex w-[145px] items-center justify-center">分时成交</div>
        <div className="flex w-[20px] items-center justify-center border-l border-[#900000] text-[11px] text-[#c0c0c0]">▶</div>
        <div className="flex flex-1 items-center justify-center border-l border-[#900000]">细</div>
      </div>
      <div className="flex h-[398px] shrink-0">
        <div className="w-[174px] shrink-0">
          {ticks.map((t, i) => <TickRow key={i} t={t} />)}
          <TickRow t={["15:00","742","",990,GR,54]} last />
        </div>
        <div className="flex flex-1 flex-col justify-between border-l border-[#a00000] pb-[2px] pt-[1px] text-center text-[10px] leading-[12px] text-white">
          <span>▲</span>
          <span className="flex flex-col items-center">
            <span className="h-[5px] w-[8px] bg-[#606060]" />
            ▼
          </span>
        </div>
      </div>
      <div className="flex h-[19px] shrink-0 border-t border-[#a00000] text-[13px] leading-[17px] text-[#b0b0b0]">
        <div className="w-[43px] bg-[#3a3a3a] text-center text-[#20c8c8]">分笔</div>
        <div className="w-[47px] border-l border-[#a00000] text-center">财务</div>
        <div className="w-[45px] border-l border-[#a00000] text-center">成本</div>
        <div className="flex-1 border-l border-[#a00000] text-center">委托</div>
      </div>
    </div>
  );
}

function Logo() {
  return (
    <div className="absolute left-[1453px] top-[5px] flex h-[56px] w-[222px] flex-col bg-white pl-[9px]">
      <div className="mt-[2px] flex h-[22px] items-center">
        <span className="w-[65px] whitespace-nowrap text-[20px] font-bold leading-[22px] text-[#1a1aff]">股海网</span>
        <span className="w-[146px] whitespace-nowrap border border-[#c0c0c0] text-center text-[17px] leading-[20px] tracking-[1px] text-[#404040]">股票软件资源分享</span>
      </div>
      <div className="mt-[3px] whitespace-nowrap [font-family:'Liberation_Sans',sans-serif] text-[23px] font-bold leading-[20px] text-[#ff3300]">Www.Guhai.com.cn</div>
    </div>
  );
}

export default function App() {
  return (
    <div className="relative flex h-[901px] w-[1680px] overflow-hidden bg-black [font-family:'Noto_Sans_CJK_SC','Liberation_Sans',sans-serif]">
      <div className="w-[6px] shrink-0 bg-[#e6eef8]" />
      <div className="flex w-[1669px] flex-col">
        <Toolbar />
        <div className="flex h-[877px]">
          <LeftTabs />
          <div className="flex w-[1222px] shrink-0 flex-col border-x border-[#a00000]">
            <MainPanel />
            <VolPanel />
            <OscPanel />
            <DateRow />
            <TabBar />
            <BottomPanels />
          </div>
          <div className="w-[243px] shrink-0">
            <Title>全盘向动</Title>
            <PanChart />
            <Title h="h-[23px]">分时走势</Title>
            <FsChart />
            <Title h="h-[23px]">深证成指</Title>
            <SzChart />
            <MidLower />
          </div>
          <Quotes />
        </div>
      </div>
      <div className="w-[5px] shrink-0 bg-[#e6eef8]" />
      <Logo />
      <div className="absolute left-[648px] top-[435px] flex items-baseline whitespace-pre text-[26px] font-bold leading-[34px] text-[#e00000]">
        股海网提供 <span className="ml-[3px] [font-family:'Liberation_Sans',sans-serif]">Www.Guhai.Com.CN</span>
      </div>
    </div>
  );
}
